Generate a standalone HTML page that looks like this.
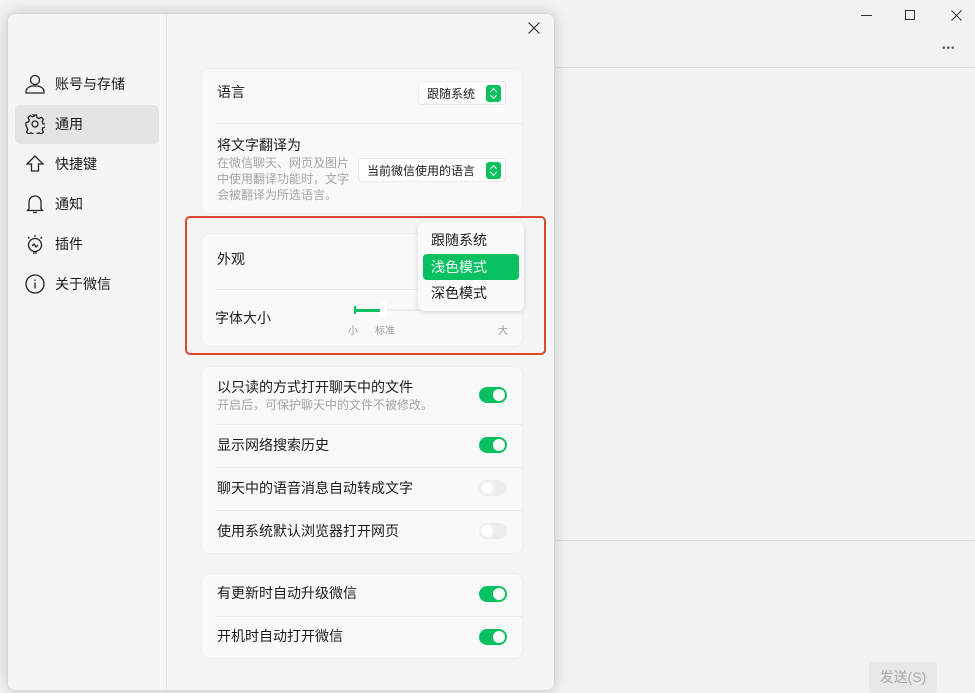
<!DOCTYPE html>
<html><head><meta charset="utf-8"><style>
*{box-sizing:border-box;margin:0;padding:0}
body{width:975px;height:693px;overflow:hidden;background:#f2f2f2;font-family:"Liberation Sans","Noto Sans CJK SC",sans-serif;color:#1a1a1a;position:relative}
.abs{position:absolute}
.dlg{left:7px;top:13px;width:548px;height:678px;background:#f5f5f5;border:1px solid #d6d6d6;border-radius:8px;box-shadow:0 0 14px rgba(0,0,0,.18);overflow:hidden}
.side{left:0;top:0;width:159px;height:100%;border-right:1px solid #e6e6e6;background:#f5f5f5}
.nav{position:absolute;left:7px;width:144px;height:39px;border-radius:5px;font-size:14px;display:flex;align-items:center;padding-left:40px;padding-bottom:2px}
.nav svg{position:absolute;left:10px;top:9px}
.nav.on{background:#e4e4e4}
.card{position:absolute;left:193px;width:322px;background:#f9f9f9;border-radius:8px;border:1px solid #eeeeee}
.row{position:absolute;left:15px;font-size:14px}
.sub{font-size:12px;color:#a5a5a5;line-height:16px}
.div{position:absolute;left:15px;right:0;height:1px;background:#ebebeb}
.sel{position:absolute;height:24px;background:#fff;border:1px solid #e9e9e9;border-radius:4px;font-size:12px;display:flex;align-items:center;padding-left:8px}
.sel i{position:absolute;right:4px;top:3px;width:15px;height:17px;background:#07c160;border-radius:3px}
.sel i:before,.sel i:after{content:"";position:absolute;left:4.5px;width:4px;height:4px;border-left:1.3px solid #fff;border-top:1.3px solid #fff}
.sel i:before{top:4px;transform:rotate(45deg)}
.sel i:after{top:8px;transform:rotate(225deg)}
.tg{position:absolute;right:15px;width:28px;height:16px;border-radius:8px;background:#07c160}
.tg:after{content:"";position:absolute;right:2px;top:2px;width:12px;height:12px;border-radius:50%;background:#fff}
.tg.off{background:#ededed}
.tg.off:after{left:2px;right:auto}
</style></head><body>
<div class="abs" style="left:555px;top:67px;width:420px;height:1px;background:#dcdcdc"></div>
<div class="abs" style="left:555px;top:540px;width:420px;height:1px;background:#dcdcdc"></div>
<div class="abs" style="left:861px;top:15px;width:11px;height:1px;background:#333"></div>
<div class="abs" style="left:905px;top:10px;width:10px;height:10px;border:1px solid #333"></div>
<svg class="abs" style="left:951px;top:10px" width="11" height="11"><path d="M0.5 0.5L10.5 10.5M10.5 0.5L0.5 10.5" stroke="#333"/></svg>
<div class="abs" style="left:942px;top:43px;font-size:10px;color:#666;letter-spacing:1px">•••</div>
<div class="abs" style="left:869px;top:662px;width:68px;height:31px;background:#e8e8e8;border-radius:4px;font-size:14px;color:#aaa;text-align:center;line-height:31px">发送(S)</div>

<div class="abs dlg">
<div class="abs side">
 <div class="nav" style="top:51px"><svg width="20" height="20" fill="none" stroke="#222" stroke-width="1.3"><circle cx="10" cy="6" r="4.5"/><path d="M1 19v-1.5c0-3 3-5 6-5.5h6c3 .5 6 2.5 6 5.5V19z"/></svg>账号与存储</div>
 <div class="nav on" style="top:91px"><svg width="20" height="20" fill="none" stroke="#222" stroke-width="1.3"><circle cx="10" cy="10" r="3"/><path d="M8.5 1h3l.5 2.5 2 1 2.3-1.2 2.1 2.1-1.2 2.3.8 2 2.5.5v3l-2.5.5-.8 2 1.2 2.3-2.1 2.1-2.3-1.2-2 .8-.5 2.5h-3l-.5-2.5-2-.8-2.3 1.2-2.1-2.1 1.2-2.3-.8-2L1 11.5v-3l2.5-.5.8-2-1.2-2.3 2.1-2.1 2.3 1.2 2-1z"/></svg>通用</div>
 <div class="nav" style="top:131px"><svg width="20" height="20" fill="none" stroke="#222" stroke-width="1.3"><path d="M10 2L2 10h4.5v7h7v-7H18z"/></svg>快捷键</div>
 <div class="nav" style="top:171px"><svg width="20" height="20" fill="none" stroke="#222" stroke-width="1.3"><path d="M4 15V8a6 6 0 0112 0v7l1.5 1.5h-15zM8 18.5h4"/></svg>通知</div>
 <div class="nav" style="top:211px"><svg width="20" height="20" fill="none" stroke="#222" stroke-width="1.3"><circle cx="10" cy="11" r="6.5"/><path d="M7 12l2-2 2 3 2-2M8 19h4M10 1v2M3 3l1.5 1.5M17 3l-1.5 1.5"/></svg>插件</div>
 <div class="nav" style="top:251px"><svg width="20" height="20" fill="none" stroke="#222" stroke-width="1.3"><circle cx="10" cy="10" r="9"/><path d="M10 8.5v6M10 5.5v1.5"/></svg>关于微信</div>
</div>
<svg class="abs" style="left:520px;top:8px" width="12" height="12"><path d="M.5 .5l11 11M11.5 .5l-11 11" stroke="#333" stroke-width="1.2"/></svg>

<div class="card" style="top:54px;height:146px">
 <div class="row" style="top:13px">语言</div>
 <div class="sel" style="left:216px;top:12px;width:88px">跟随系统<i></i></div>
 <div class="div" style="top:54px"></div>
 <div class="row" style="top:66px;width:140px">将文字翻译为<div class="sub">在微信聊天、网页及图片中使用翻译功能时，文字会被翻译为所选语言。</div></div>
 <div class="sel" style="left:156px;top:89px;width:148px">当前微信使用的语言<i></i></div>
</div>

<div class="card" style="top:219px;height:114px">
 <div class="row" style="top:15px">外观</div>
 <div class="div" style="top:55px"></div>
 <div class="row" style="top:74px;left:13px">字体大小</div>
 <div class="abs" style="left:152px;top:75px;width:160px;height:2px;background:#ececec"></div>
 <div class="abs" style="left:152px;top:72px;width:2px;height:8px;background:#07c160"></div>
 <div class="abs" style="left:152px;top:75px;width:28px;height:3px;background:#07c160"></div>
 <div class="abs" style="left:178px;top:68px;width:7px;height:16px;background:#fff;border-radius:3px"></div>
 <div class="abs" style="left:146px;top:88px;font-size:10px;color:#999">小</div>
 <div class="abs" style="left:173px;top:88px;font-size:10px;color:#999">标准</div>
 <div class="abs" style="left:296px;top:88px;font-size:10px;color:#999">大</div>
</div>

<div class="abs" style="left:177px;top:202px;width:361px;height:139px;border:2px solid #d94a2f;border-radius:5px"></div>

<div class="abs" style="left:410px;top:208px;width:106px;height:89px;background:#fafafa;border-radius:6px;box-shadow:0 1px 6px rgba(0,0,0,.15);font-size:14px">
 <div class="abs" style="left:13px;top:8px">跟随系统</div>
 <div class="abs" style="left:5px;top:32px;width:96px;height:26px;background:#07c160;border-radius:4px;color:#fff;padding:3px 0 0 8px">浅色模式</div>
 <div class="abs" style="left:13px;top:61px">深色模式</div>
</div>

<div class="card" style="top:352px;height:188px">
 <div class="row" style="top:10px">以只读的方式打开聊天中的文件<div class="sub">开启后，可保护聊天中的文件不被修改。</div></div>
 <div class="tg" style="top:20px"></div>
 <div class="div" style="top:57px"></div>
 <div class="row" style="top:68px">显示网络搜索历史</div>
 <div class="tg" style="top:70px"></div>
 <div class="div" style="top:100px"></div>
 <div class="row" style="top:111px">聊天中的语音消息自动转成文字</div>
 <div class="tg off" style="top:113px"></div>
 <div class="div" style="top:143px"></div>
 <div class="row" style="top:154px">使用系统默认浏览器打开网页</div>
 <div class="tg off" style="top:156px"></div>
</div>

<div class="card" style="top:559px;height:86px">
 <div class="row" style="top:9px">有更新时自动升级微信</div>
 <div class="tg" style="top:12px"></div>
 <div class="div" style="top:42px"></div>
 <div class="row" style="top:52px">开机时自动打开微信</div>
 <div class="tg" style="top:55px"></div>
</div>
</div>
</body></html>
